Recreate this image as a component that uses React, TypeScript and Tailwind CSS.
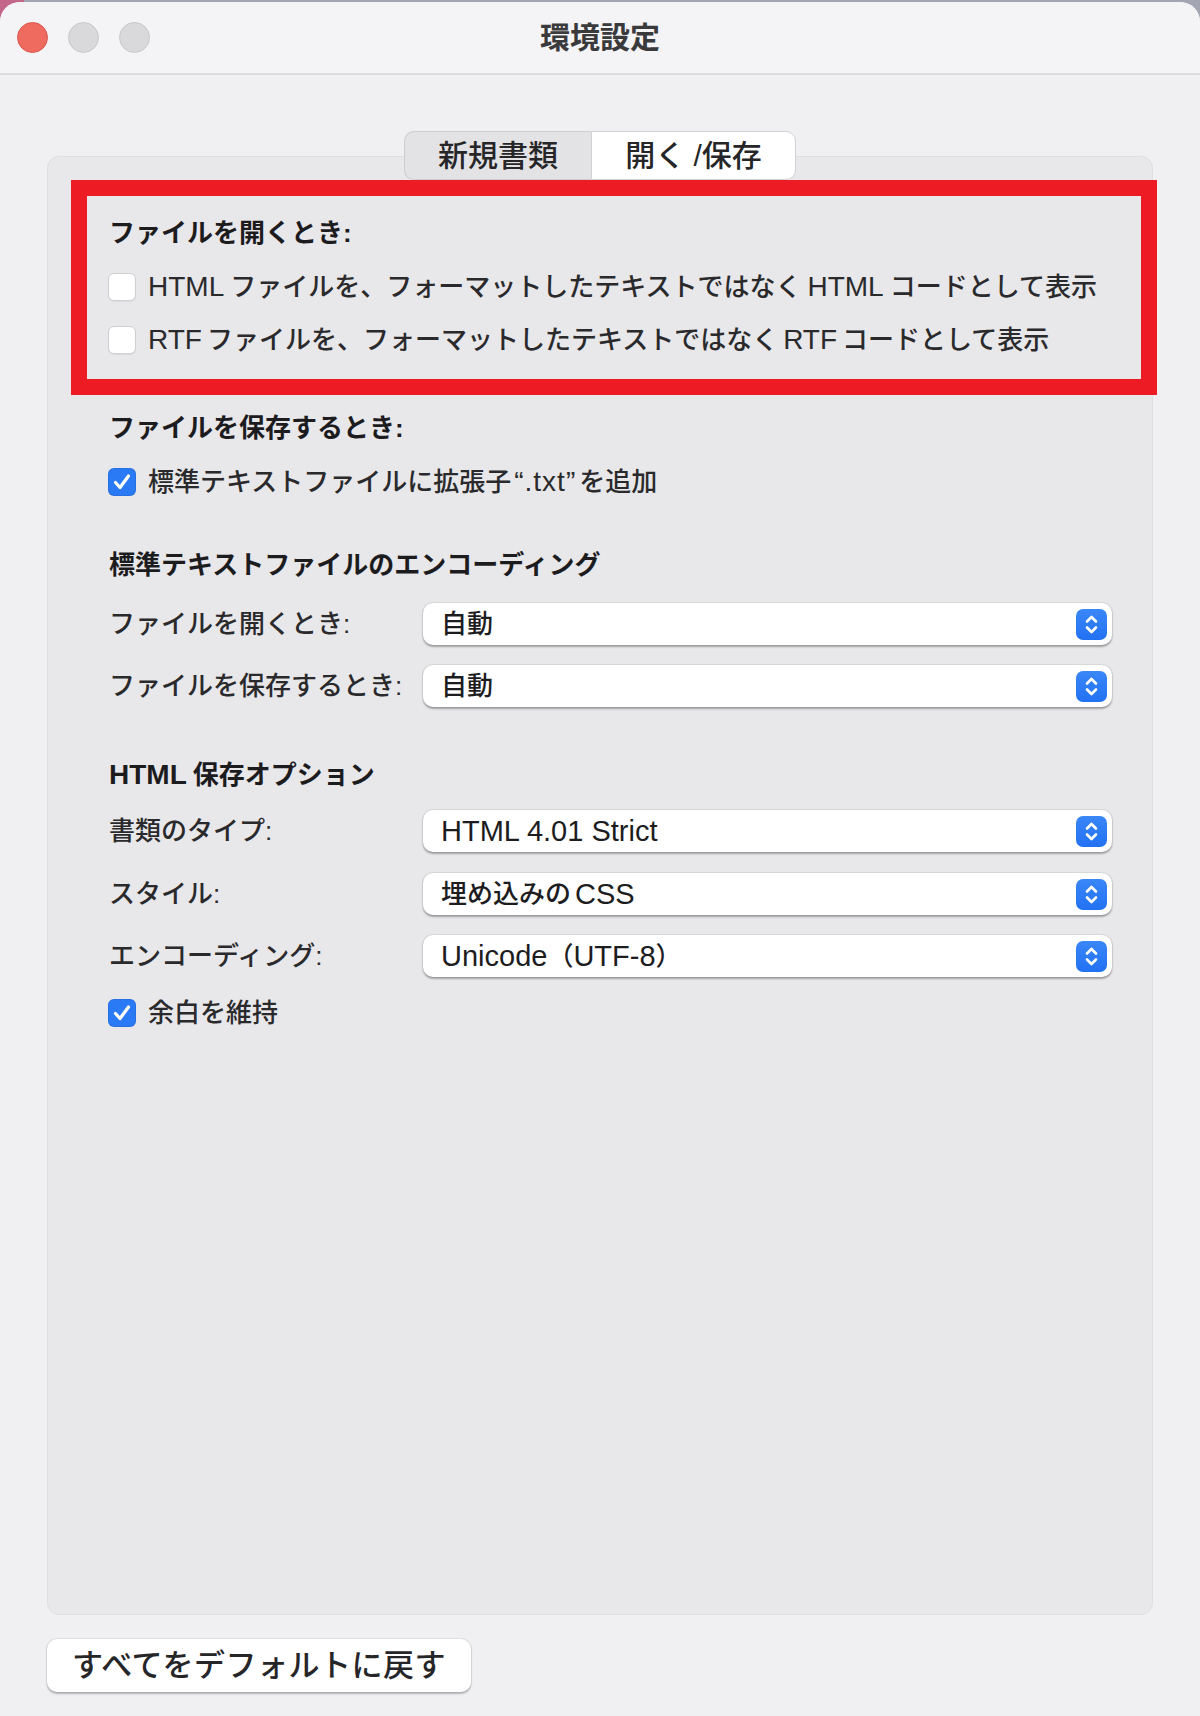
import React from "react";

function Lat({ children, className = "" }: { children: React.ReactNode; className?: string }) {
  return <span className={"text-[28px] " + className}>{children}</span>;
}

function PLat({ children, className = "" }: { children: React.ReactNode; className?: string }) {
  return <span className={"text-[29px] " + className}>{children}</span>;
}

function Checkbox({ checked = false }: { checked?: boolean }) {
  if (checked) {
    return (
      <div className="w-[28px] h-[28px] shrink-0 rounded-[6px] bg-[#2b7af5] flex items-center justify-center shadow-[inset_0_0_0_1px_rgba(0,0,0,0.08)]">
        <svg width="22" height="22" viewBox="0 0 22 22">
          <path d="M4.5 11.5 L9 16.5 L17.5 5" stroke="white" strokeWidth="3.2" fill="none" strokeLinecap="round" strokeLinejoin="round" />
        </svg>
      </div>
    );
  }
  return (
    <div className="w-[28px] h-[28px] shrink-0 rounded-[6px] bg-white border border-[#cfced1] shadow-[0_1px_1px_rgba(0,0,0,0.06)]" />
  );
}

function Stepper() {
  return (
    <div className="w-[31px] h-[31px] shrink-0 rounded-[7px] bg-[linear-gradient(180deg,#3a87f8,#2271f2)] flex items-center justify-center">
      <svg width="31" height="31" viewBox="0 0 31 31">
        <path d="M11 12.5 L15.5 8 L20 12.5" stroke="white" strokeWidth="2.6" fill="none" strokeLinecap="round" strokeLinejoin="round" />
        <path d="M11 18.5 L15.5 23 L20 18.5" stroke="white" strokeWidth="2.6" fill="none" strokeLinecap="round" strokeLinejoin="round" />
      </svg>
    </div>
  );
}

function Popup({ children }: { children: React.ReactNode }) {
  return (
    <div className="w-[689px] h-[42px] rounded-[10px] bg-white shadow-[0_1.5px_2px_rgba(0,0,0,0.3),0_0_0_1px_rgba(0,0,0,0.05)] flex items-center pl-[18px] pr-[5px]">
      <div className="flex-1 text-[26px] leading-[30px] font-medium text-[#1d1d1f] flex items-center">{children}</div>
      <Stepper />
    </div>
  );
}

function PopupRow({ label, children, className = "" }: { label: React.ReactNode; children: React.ReactNode; className?: string }) {
  return (
    <div className={"flex items-center h-[42px] " + className}>
      <div className="w-[315px] pl-[1px] text-[26px] leading-[30px] font-medium text-[#2a2a2c]">{label}</div>
      <Popup>{children}</Popup>
    </div>
  );
}

function CheckRow({ checked, children, className = "" }: { checked?: boolean; children: React.ReactNode; className?: string }) {
  return (
    <div className={"flex items-center h-[30px] gap-[12px] " + className}>
      <Checkbox checked={checked} />
      <div className="text-[26px] leading-[30px] font-medium text-[#2a2a2c] flex items-center whitespace-nowrap">{children}</div>
    </div>
  );
}

function Heading({ children, className = "" }: { children: React.ReactNode; className?: string }) {
  return (
    <div className={"h-[30px] pl-[1px] flex items-center text-[26px] leading-[30px] font-bold text-[#1c1c1e] whitespace-nowrap " + className}>
      {children}
    </div>
  );
}

export default function App() {
  return (
    <div className="w-[1200px] h-[1716px] overflow-hidden bg-[linear-gradient(90deg,#c4668a_0px,#c4668a_24px,#a3a5b2_24px)] font-['Liberation_Sans','Noto_Sans_CJK_JP',sans-serif]">
      <div className="mt-[2px] h-[1714px] bg-[#f0eff2] rounded-t-[20px] flex flex-col">
        {/* Title bar */}
        <div className="h-[73px] shrink-0 bg-[#f4f3f6] rounded-t-[20px] border-b-2 border-[#dbdadd] grid grid-cols-[1fr_auto_1fr] items-center">
          <div className="flex items-center gap-[20px] pl-[17px]">
            <div className="w-[31px] h-[31px] rounded-full bg-[#ef6b60] border border-[#d9574d]" />
            <div className="w-[31px] h-[31px] rounded-full bg-[#d9d8db] border border-[#c8c7ca]" />
            <div className="w-[31px] h-[31px] rounded-full bg-[#d9d8db] border border-[#c8c7ca]" />
          </div>
          <div className="text-[30px] leading-[36px] font-bold text-[#3a3a3c]">環境設定</div>
          <div />
        </div>

        {/* Body */}
        <div className="px-[47px] pt-[56px] flex flex-col">
          {/* Tabs */}
          <div className="relative z-10 h-[49px] flex justify-center">
            <div className="w-[187px] h-[49px] bg-[#e3e2e5] border-[1.5px] border-r-0 border-[#cdccd0] rounded-l-[10px] flex items-center justify-center text-[30px] leading-[36px] font-medium text-[#262628]">
              新規書類
            </div>
            <div className="w-[205px] h-[49px] bg-white border-[1.5px] border-[#d2d1d4] rounded-r-[10px] flex items-center justify-center text-[30px] leading-[36px] font-medium text-[#262628]">
              開く /保存
            </div>
          </div>

          {/* Panel */}
          <div className="mt-[-24px] h-[1459px] rounded-[12px] bg-[#e8e7ea] border border-[#dfdee1] flex flex-col">
            {/* Red annotation box */}
            <div className="relative z-20 mt-[23px] ml-[23px] w-[1086px] border-[16px] border-[#ed1c24] pl-[21px] pt-[22px] pb-[24px] flex flex-col">
              <Heading>ファイルを開くとき:</Heading>
              <CheckRow className="mt-[24px]">
                <Lat className="mr-[6px]">HTML</Lat>ファイルを、フォーマットしたテキストではなく<Lat className="mx-[6px]">HTML</Lat>コードとして表示
              </CheckRow>
              <CheckRow className="mt-[23px]">
                <Lat className="mr-[5px]">RTF</Lat>ファイルを、フォーマットしたテキストではなく<Lat className="mx-[5px]">RTF</Lat>コードとして表示
              </CheckRow>
            </div>

            <div className="pl-[60px] flex flex-col">
              <Heading className="mt-[18px]">ファイルを保存するとき:</Heading>
              <CheckRow checked className="mt-[24px]">
                標準テキストファイルに拡張子<Lat className="mx-[3px] tracking-[1px]">“.txt”</Lat>を追加
              </CheckRow>

              <Heading className="mt-[53px]">標準テキストファイルのエンコーディング</Heading>
              <PopupRow label="ファイルを開くとき:" className="mt-[23px]">
                自動
              </PopupRow>
              <PopupRow label="ファイルを保存するとき:" className="mt-[20px]">
                自動
              </PopupRow>

              <Heading className="mt-[53px]">
                <Lat className="mr-[6px]">HTML</Lat>保存オプション
              </Heading>
              <PopupRow label="書類のタイプ:" className="mt-[20px]">
                <PLat>HTML 4.01 Strict</PLat>
              </PopupRow>
              <PopupRow label="スタイル:" className="mt-[21px]">
                埋め込みの<PLat className="ml-[4px]">CSS</PLat>
              </PopupRow>
              <PopupRow label="エンコーディング:" className="mt-[20px]">
                <PLat>Unicode</PLat>（<PLat>UTF-8</PLat>）
              </PopupRow>
              <CheckRow checked className="mt-[21px]">
                余白を維持
              </CheckRow>
            </div>
          </div>

          {/* Bottom button */}
          <div className="mt-[24px] w-[424px] h-[53px] rounded-[10px] bg-white shadow-[0_1.5px_2px_rgba(0,0,0,0.25),0_0_0_1px_rgba(0,0,0,0.05)] flex items-center justify-center text-[31px] leading-[36px] tracking-[0.5px] font-medium text-[#262628]">
            すべてをデフォルトに戻す
          </div>
        </div>
      </div>
    </div>
  );
}
